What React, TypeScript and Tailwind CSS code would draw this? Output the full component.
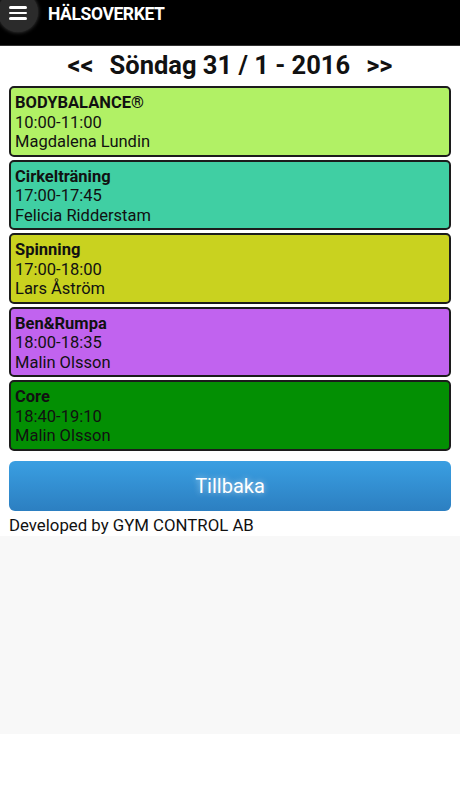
import React from "react";

type Pass = {
  name: string;
  time: string;
  leader: string;
  color: string;
};

const passes: Pass[] = [
  { name: "BODYBALANCE®", time: "10:00-11:00", leader: "Magdalena Lundin", color: "bg-[#b1f165]" },
  { name: "Cirkelträning", time: "17:00-17:45", leader: "Felicia Ridderstam", color: "bg-[#40cfa3]" },
  { name: "Spinning", time: "17:00-18:00", leader: "Lars Åström", color: "bg-[#c9d21f]" },
  { name: "Ben&Rumpa", time: "18:00-18:35", leader: "Malin Olsson", color: "bg-[#c163ef]" },
  { name: "Core", time: "18:40-19:10", leader: "Malin Olsson", color: "bg-[#038f03]" },
];

const MenuButton = () => (
  <div className="-ml-[2px] -mt-[8px] flex h-[40px] w-[40px] shrink-0 items-center justify-center rounded-full bg-[#2b2b2b] shadow-[0_0_4px_rgba(90,90,90,0.8)]">
    <div className="mt-[2px] flex flex-col gap-[3px]">
      <span className="block h-[2.5px] w-[18px] rounded-sm bg-white" />
      <span className="block h-[2.5px] w-[18px] rounded-sm bg-white" />
      <span className="block h-[2.5px] w-[18px] rounded-sm bg-white" />
    </div>
  </div>
);

const PassCard = ({ pass }: { pass: Pass }) => (
  <div
    className={`rounded-[5px] border-2 border-[#1c1c1c] px-[4px] pt-[5px] pb-[3px] text-[16.5px] leading-[19.5px] text-[#111] ${pass.color}`}
  >
    <div className="font-bold">{pass.name}</div>
    <div>{pass.time}</div>
    <div>{pass.leader}</div>
  </div>
);

export default function App() {
  return (
    <div className="min-h-[788px] w-full bg-white font-['Roboto',_'Liberation_Sans',_sans-serif]">
      {/* header */}
      <div className="flex h-[46px] items-start gap-[10px] border-b border-[#333] bg-black">
        <MenuButton />
        <span className="mt-[1px] text-[17.5px] font-bold tracking-[-0.4px] text-white">
          HÄLSOVERKET
        </span>
      </div>

      <div className="bg-white px-[9px]">
        {/* date row */}
        <div className="flex h-[40px] items-center justify-center gap-[16px] pb-[1px] text-[25.5px] font-bold text-[#111]">
          <span>&lt;&lt;</span>
          <span>Söndag 31 / 1 - 2016</span>
          <span>&gt;&gt;</span>
        </div>

        <div className="flex flex-col gap-[3px]">
          {passes.map((p) => (
            <PassCard key={p.name} pass={p} />
          ))}
        </div>

        <button className="mt-[10px] flex h-[50px] w-full items-center justify-center rounded-[6px] bg-gradient-to-b from-[#3a9fe2] to-[#2c7fc1] text-[20px] text-white [text-shadow:0_0_6px_rgba(255,255,255,0.6)]">
          Tillbaka
        </button>

        <div className="h-[25px] pt-[4px] text-[16.8px] leading-[21px] text-[#111]">
          Developed by GYM CONTROL AB
        </div>
      </div>

      <div className="h-[198px] bg-[#f8f8f8]" />
    </div>
  );
}
